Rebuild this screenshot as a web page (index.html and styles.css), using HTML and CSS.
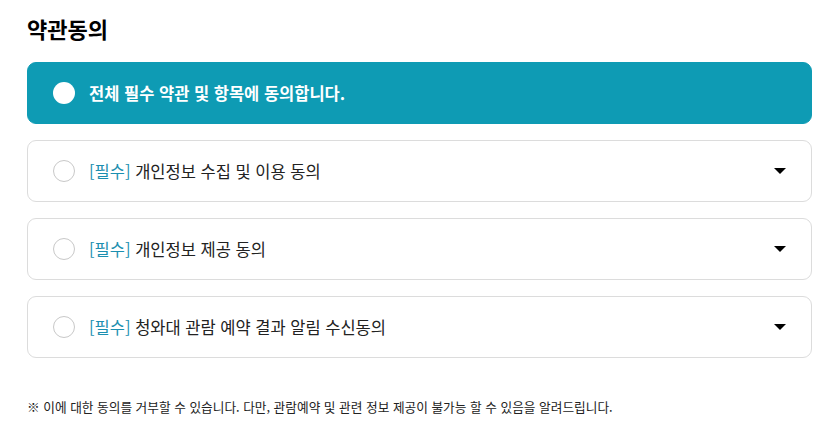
FILE: index.html
```html
<!DOCTYPE html>
<html lang="ko">
<head>
<meta charset="utf-8">
<link rel="stylesheet" href="styles.css">
</head>
<body>
<div class="wrap">
  <h2 class="title">약관동의</h2>
  <div class="list">
    <div class="row all">
      <span class="radio"></span>
      <span class="label">전체 필수 약관 및 항목에 동의합니다.</span>
    </div>
    <div class="row">
      <span class="radio"></span>
      <span class="label"><span class="req">[필수]</span> 개인정보 수집 및 이용 동의</span>
      <span class="caret"></span>
    </div>
    <div class="row">
      <span class="radio"></span>
      <span class="label"><span class="req">[필수]</span> 개인정보 제공 동의</span>
      <span class="caret"></span>
    </div>
    <div class="row">
      <span class="radio"></span>
      <span class="label"><span class="req">[필수]</span> 청와대 관람 예약 결과 알림 수신동의</span>
      <span class="caret"></span>
    </div>
  </div>
  <p class="note">※ 이에 대한 동의를 거부할 수 있습니다. 다만, 관람예약 및 관련 정보 제공이 불가능 할 수 있음을 알려드립니다.</p>
</div>
</body>
</html>
```

FILE: styles.css
```css
html, body {
  margin: 0;
  padding: 0;
  background: #fff;
}
body {
  font-family: "Noto Sans CJK KR", "Noto Sans", sans-serif;
  color: #111;
}
.wrap {
  padding: 12px 16px 0 27px;
}
.title {
  margin: 0;
  font-size: 22px;
  font-weight: 700;
  line-height: 32px;
  color: #000;
}
.list {
  margin-top: 18px;
  display: flex;
  flex-direction: column;
  gap: 16px;
}
.row {
  height: 62px;
  box-sizing: border-box;
  border: 1px solid #dcdcdc;
  border-radius: 9px;
  display: flex;
  align-items: center;
  padding: 0 25px 0 25px;
  background: #fff;
}
.row.all {
  background: #0e9bb4;
  border-color: #0e9bb4;
}
.radio {
  width: 22px;
  height: 22px;
  box-sizing: border-box;
  border-radius: 50%;
  border: 1px solid #c8c8c8;
  background: #fff;
  flex: none;
}
.row.all .radio {
  border: none;
}
.label {
  margin-left: 14px;
  font-size: 16.5px;
  line-height: 24px;
  color: #222;
  flex: 1;
}
.row.all .label {
  color: #fff;
  font-weight: 700;
}
.req {
  color: #1b8fb0;
}
.caret {
  width: 0;
  height: 0;
  border-left: 6px solid transparent;
  border-right: 6px solid transparent;
  border-top: 6px solid #000;
  flex: none;
}
.note {
  margin: 40px 0 0 0;
  font-size: 12.7px;
  line-height: 18px;
  color: #222;
}
```
